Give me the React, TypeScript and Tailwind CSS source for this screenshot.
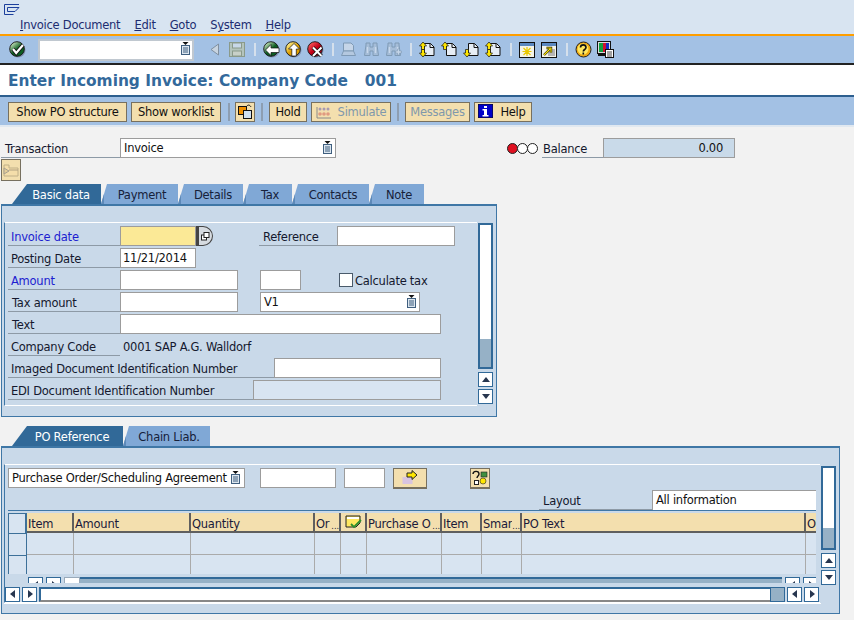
import React from "react";

function Sep() {
  return <div className="w-[2px] h-[13px] bg-[#d5e0ec] shrink-0" />;
}

function RoundIcon({ from, to, kind }: { from: string; to: string; kind: "check" | "back" | "up" | "x" }) {
  const id = "g" + kind;
  return (
    <svg width="17" height="17" viewBox="0 0 17 17" className="shrink-0">
      <defs>
        <linearGradient id={id} x1="0.1" y1="0.1" x2="0.8" y2="0.9">
          <stop offset="0" stopColor={from} />
          <stop offset="0.55" stopColor={to} />
        </linearGradient>
      </defs>
      <circle cx="9" cy="9" r="7.500" fill="#7f8fb0" />
      <circle cx="8" cy="8" r="7.300" fill={"url(#" + id + ")"} stroke="#141414" strokeWidth="0.9" />
      {kind === "check" && (
        <>
          <path d="M4 8l3.200 4 6.800-8" fill="none" stroke="#111" strokeWidth="3.800" />
          <path d="M4 8l3.200 4 6.800-8" fill="none" stroke="#fff" strokeWidth="2.200" />
        </>
      )}
      {kind === "back" && <path d="M2.500 9l5.500-5.500v3.500h8v4.500H8v3z" fill="#fff" stroke="#111" strokeWidth="0.7" />}
      {kind === "up" && <path d="M9 2.500l5.500 5.500h-3.200v7H6.800V8H3.500z" fill="#fff" stroke="#111" strokeWidth="0.7" />}
      {kind === "x" && (
        <>
          <path d="M6 6.500l8.500 8.500M14.500 6.500L6 15" stroke="#111" strokeWidth="3.600" />
          <path d="M6 6.500l8.500 8.500M14.500 6.500L6 15" stroke="#fff" strokeWidth="2" />
        </>
      )}
    </svg>
  );
}

function Pick() {
  return (
    <svg width="9" height="13" viewBox="0 0 9 13" className="shrink-0 -mt-[3px]">
      <path d="M1.500 0h6L4.500 3z" fill="#111" />
      <rect x="0.500" y="3.500" width="8" height="9" fill="#dce6ef" stroke="#3f5f7f" />
      <path d="M2 6h5M2 8h5M2 10h5" stroke="#3f5f7f" />
    </svg>
  );
}

function Printer() {
  return (
    <svg width="15" height="15" viewBox="0 0 15 15" className="shrink-0">
      <path d="M2.500 1h7.500l2.500 2.500V9h-10z" fill="#c5d5e8" stroke="#7f9ab5" />
      <path d="M2.500 9L.5 13.500h14L12.500 9z" fill="#b4c8df" stroke="#7f9ab5" />
    </svg>
  );
}

function Binoc({ plus }: { plus?: boolean }) {
  return (
    <svg width="16" height="15" viewBox="0 0 16 15" className="shrink-0">
      <path d="M2 1h4v4h3V1h4v2l1.500 10.500H9V9H6v4.500H.5L2 3z" fill="#a5bdd8" stroke="#7f9ab5" />
      <path d="M3.500 5v6M11.500 5v6" stroke="#c8d8ea" strokeWidth="1.400" />
      {plus && <path d="M11.500 7h2v2h2v2h-2v2h-2v-2h-2V9h2z" fill="#c5d5e8" stroke="#7f9ab5" strokeWidth="0.6" />}
    </svg>
  );
}

function PageArrow({ kind }: { kind: "first" | "prev" | "next" | "last" }) {
  return (
    <svg width="16" height="15" viewBox="0 0 16 15" className="shrink-0">
      <path d="M5.500 1.500h6l3.500 3.500v8.500H5.500z" fill="#e6edf5" stroke="#111" />
      <path d="M11 1.500V5.500h4" fill="none" stroke="#111" />
      {(kind === "first" || kind === "last" || kind === "prev") && <path d="M4 0L.5 4h2v3.500h3V4h2z" fill="#ffe600" stroke="#111" strokeWidth="0.7" />}
      {(kind === "first" || kind === "last" || kind === "next") && <path d="M4 15L.5 11h2V7.500h3V11h2z" fill="#ffe600" stroke="#111" strokeWidth="0.7" />}
    </svg>
  );
}

function WinIcon({ kind }: { kind: "new" | "short" }) {
  return (
    <svg width="16" height="16" viewBox="0 0 16 16" className="shrink-0">
      <rect x="0.500" y="0.500" width="15" height="15" fill="#f4f4e8" stroke="#111" />
      <rect x="1" y="1" width="14" height="3" fill="#5a88c0" />
      {kind === "new" && <path d="M8 5v9M3.500 9.500h9M4.500 6l7 7M11.500 6l-7 7" stroke="#e8c800" strokeWidth="1.200" />}
      {kind === "short" && (
        <>
          <rect x="7" y="7" width="7" height="7" fill="#b5b5b5" />
          <path d="M3 13l6-6M5.500 6h4.500v4.500" fill="none" stroke="#111" strokeWidth="2.400" />
          <path d="M3 13l6-6M5.500 6h4.500v4.500" fill="none" stroke="#ffe600" strokeWidth="1.200" />
        </>
      )}
    </svg>
  );
}

function Toolbar() {
  return (
    <div className="h-[29px] bg-[#a3c1e4] flex items-center border-b-2 border-[#222]">
      <div className="w-[9px]" />
      <RoundIcon from="#d8f0c8" to="#0d5d22" kind="check" />
      <div className="ml-[12px] w-[156px] h-[22px] bg-white border-2 border-[#c0c8d0] flex items-center justify-end pr-[2px]">
        <Pick />
      </div>
      <svg width="10" height="13" viewBox="0 0 10 13" className="ml-[16px] shrink-0">
        <path d="M8.500 1v11L1 6.500z" fill="#c8d4e0" stroke="#8090a0" />
      </svg>
      <svg width="16" height="15" viewBox="0 0 16 15" className="ml-[9px] shrink-0">
        <rect x="0.500" y="0.500" width="15" height="14" fill="#b4c4bc" stroke="#8a9a8a" />
        <rect x="3.500" y="1" width="9" height="5" fill="#c8d8e8" stroke="#8a9a8a" />
        <rect x="3.500" y="9" width="9" height="5" fill="#c8d0c8" stroke="#8a9a8a" />
      </svg>
      <div className="ml-[9px]"><Sep /></div>
      <div className="ml-[7px]"><RoundIcon from="#d8f0c8" to="#0d5d22" kind="back" /></div>
      <div className="ml-[5px]"><RoundIcon from="#fff8a0" to="#e0a000" kind="up" /></div>
      <div className="ml-[5px]"><RoundIcon from="#ff6060" to="#c00018" kind="x" /></div>
      <div className="ml-[8px]"><Sep /></div>
      <div className="ml-[7px]"><Printer /></div>
      <div className="ml-[8px]"><Binoc /></div>
      <div className="ml-[6px]"><Binoc plus /></div>
      <div className="ml-[8px]"><Sep /></div>
      <div className="ml-[7px]"><PageArrow kind="first" /></div>
      <div className="ml-[6px]"><PageArrow kind="prev" /></div>
      <div className="ml-[6px]"><PageArrow kind="next" /></div>
      <div className="ml-[6px]"><PageArrow kind="last" /></div>
      <div className="ml-[9px]"><Sep /></div>
      <div className="ml-[7px]"><WinIcon kind="new" /></div>
      <div className="ml-[6px]"><WinIcon kind="short" /></div>
      <div className="ml-[9px]"><Sep /></div>
      <svg width="17" height="17" viewBox="0 0 17 17" className="ml-[7px] shrink-0">
        <circle cx="8.500" cy="8.500" r="7.500" fill="#f0a810" stroke="#222" />
        <circle cx="8" cy="8" r="5.500" fill="#ffe860" />
        <path d="M5.500 6.500c0-3.500 5.500-3.500 5.500 0 0 2-2.700 2-2.700 4M8.300 11.500v2" fill="none" stroke="#111" strokeWidth="1.600" />
      </svg>
      <svg width="17" height="17" viewBox="0 0 17 17" className="ml-[5px] shrink-0">
        <rect x="0.500" y="0.500" width="13" height="12" fill="#ddd" stroke="#111" />
        <rect x="2" y="2" width="4" height="9" fill="#10a040" />
        <rect x="6" y="2" width="3" height="9" fill="#d01030" />
        <rect x="9" y="2" width="3" height="9" fill="#1030c0" />
        <path d="M1 14h10" stroke="#111" strokeWidth="2" />
        <rect x="8.500" y="8.500" width="8" height="8" fill="#fff" stroke="#111" />
        <path d="M10 11h5M10 13h5M10 15h5" stroke="#111" strokeWidth="0.800" />
      </svg>
    </div>
  );
}

function Btn({ children, w, dim, ml }: { children: React.ReactNode; w: string; dim?: boolean; ml?: string }) {
  return (
    <div className={`${w} ${ml ?? ""} h-[20px] shrink-0 bg-[#f3dfae] border border-[#77705f] flex items-center justify-center pt-[2px] whitespace-nowrap ${dim ? "text-[#7f98ac]" : "text-[#111]"}`}>
      {children}
    </div>
  );
}

function AppBar() {
  return (
    <div className="h-[30px] bg-[#a3c1e4] flex items-center pl-[8px] pt-[1px] border-b-2 border-[#e0e8f0]">
      <Btn w="w-[119px]">Show PO structure</Btn>
      <Btn w="w-[90px]" ml="ml-[4px]">Show worklist</Btn>
      <div className="ml-[7px]"><div className="w-[2px] h-[18px] bg-[#8d9eb2]" /></div>
      <div className="ml-[5px] w-[20px] h-[20px] bg-[#f3dfae] border border-[#77705f] flex items-center justify-center shrink-0">
        <svg width="15" height="15" viewBox="0 0 15 15">
          <rect x="0.500" y="2.500" width="8" height="8" fill="#f09000" stroke="#111" />
          <rect x="5.500" y="6.500" width="8" height="8" fill="#cfe0f0" stroke="#111" />
          <path d="M8 3c2-3 4-2 5 0" fill="none" stroke="#111" />
        </svg>
      </div>
      <div className="ml-[6px]"><div className="w-[2px] h-[18px] bg-[#8d9eb2]" /></div>
      <Btn w="w-[38px]" ml="ml-[6px]">Hold</Btn>
      <Btn w="w-[80px]" ml="ml-[4px]" dim>
        <span className="flex items-center gap-[6px]">
          <svg width="16" height="14" viewBox="0 0 16 14" className="-mt-[2px]">
            <path d="M1 2v11h14" fill="none" stroke="#8a8a8a" />
            <g fill="#a89ab0">
              <circle cx="4" cy="4" r="1.500" /><circle cx="8" cy="4" r="1.500" /><circle cx="12" cy="4" r="1.500" />
            </g>
            <g fill="#e09a80">
              <circle cx="4" cy="9" r="1.800" /><circle cx="8" cy="9" r="1.800" /><circle cx="12" cy="9" r="1.800" />
            </g>
          </svg>
          Simulate
        </span>
      </Btn>
      <div className="ml-[6px]"><div className="w-[2px] h-[18px] bg-[#8d9eb2]" /></div>
      <Btn w="w-[65px]" ml="ml-[6px]" dim>Messages</Btn>
      <Btn w="w-[58px]" ml="ml-[4px]">
        <span className="flex items-center gap-[7px] -ml-[2px]">
          <svg width="15" height="14" viewBox="0 0 15 14" className="-mt-[3px]">
            <rect width="15" height="14" fill="#0000c8" stroke="#111" />
            <path d="M6 2h3v2H6zM4.500 5H9v6h1.500v1.500h-6V11H6V6.500H4.500z" fill="#fff" />
          </svg>
          Help
        </span>
      </Btn>
    </div>
  );
}

function ActiveTab({ label, w }: { label: string; w: string }) {
  return (
    <div className={`${w} h-[20px] shrink-0 flex items-center justify-center pl-[9px] pt-[3px] [clip-path:polygon(15px_0,100%_0,100%_100%,0_100%)] bg-[#316998] text-white`}>
      {label}
    </div>
  );
}

function Tab({ label, w }: { label: string; w: string }) {
  return (
    <div className={`${w} h-[20px] shrink-0 flex items-center justify-center pl-[2px] pt-[3px] [clip-path:polygon(6px_0,100%_0,100%_100%,0_100%)] bg-[#80a8d6] text-[#16213a] border-l-[3px] border-[#5d89b8]`}>
      {label}
    </div>
  );
}

function Field({ w, ml, children, bg, cls }: { w: string; ml?: string; children?: React.ReactNode; bg?: string; cls?: string }) {
  return (
    <div className={`${w} ${ml ?? ""} h-[20px] shrink-0 ${bg ?? "bg-white"} border border-[#9c9c9c] flex items-center pl-[3px] pr-[3px] pt-[2px] text-[#111] ${cls ?? ""}`}>
      {children}
    </div>
  );
}

function Label({ w, ml, children, blue }: { w: string; ml?: string; children: React.ReactNode; blue?: boolean }) {
  return (
    <div className={`${w} ${ml ?? ""} h-[20px] shrink-0 border-b border-[#8d9aa6] flex items-center pl-[3px] pt-[4px] whitespace-nowrap ${blue ? "text-[#1d1dd0]" : "text-[#14182e]"}`}>
      {children}
    </div>
  );
}

function Row({ children }: { children: React.ReactNode }) {
  return <div className="flex h-[20px] items-center mb-[2px]">{children}</div>;
}

function ArrowBtn({ dir, ml }: { dir: "up" | "down" | "left" | "right"; ml?: string }) {
  const p = { up: "M1 7l4-5 4 5z", down: "M1 2l4 5 4-5z", left: "M7 1L2 5l5 4z", right: "M3 1l5 4-5 4z" }[dir];
  return (
    <div className={`w-[15px] h-[15px] ${ml ?? ""} shrink-0 bg-white border border-[#316998] flex items-center justify-center`}>
      <svg width="10" height="10" viewBox="0 0 10 10"><path d={p} fill="#27364f" /></svg>
    </div>
  );
}

function VScroll({ track, thumb }: { track: string; thumb: string }) {
  return (
    <div className="w-[15px] shrink-0 flex flex-col">
      <div className={`${track} bg-white border-2 border-[#316998] border-b-0`} />
      <div className={`${thumb} bg-[#96b1c6] border-2 border-t-0 border-[#316998]`} />
      <div className="mt-[3px]"><ArrowBtn dir="up" /></div>
      <div className="mt-[2px]"><ArrowBtn dir="down" /></div>
    </div>
  );
}

function Head({ w, children, tail, last }: { w: string; children?: React.ReactNode; tail?: boolean; last?: boolean }) {
  return (
    <div className={`${w} shrink-0 h-[20px] bg-[#f3dfae] ${last ? "" : "border-r-2"} border-b-2 border-[#5f5f5f] pl-[1px] text-[#1a1a3a] flex items-center overflow-hidden whitespace-nowrap`}>
      <span className="flex-1 min-w-0 overflow-hidden flex items-center pt-[5px] h-[18px]">{children}</span>
      {tail && <span className="shrink-0 self-end text-[8px] leading-[9px] tracking-normal">...</span>}
    </div>
  );
}

const COLS = ["w-[47px]", "w-[117px]", "w-[124px]", "w-[26px]", "w-[26px]", "w-[75px]", "w-[40px]", "w-[40px]", "w-[284px]", "w-[11px]"];

function DataRow({ h }: { h: string }) {
  return (
    <div className={`flex ${h} border-b border-[#aaa]`}>
      <div className="w-[19px] shrink-0 bg-[#d8e4f1] border-t border-l border-r border-[#3d7099] h-[25px]" />
      {COLS.map((c, i) => (
        <div key={i} className={`${c} shrink-0 bg-[#d8e4f1] ${i < 9 ? "border-r border-[#aaa]" : ""}`} />
      ))}
    </div>
  );
}

export default function App() {
  return (
    <div className="w-[854px] h-[620px] overflow-hidden bg-[#f2f2f2] [font-family:'DejaVu_Sans',sans-serif] text-[11.500px] tracking-[-0.25px] relative">
      {/* Menu */}
      <div className="h-[34px] bg-[#d8e4f1] pt-[4px]">
        <svg width="16" height="12" viewBox="0 0 16 12" className="ml-[4px] block">
          <path d="M.5.5H15M.5.5v10h9M3.500 3.500H15L11 7.500H3.500z" fill="none" stroke="#1c3f9c" />
        </svg>
        <div className="flex ml-[20px] mt-[2px] h-[16px] items-center text-[#202c70] gap-[14px]">
          <span><u>I</u>nvoice Document</span>
          <span><u>E</u>dit</span>
          <span><u>G</u>oto</span>
          <span>S<u>y</u>stem</span>
          <span><u>H</u>elp</span>
        </div>
      </div>
      <div className="h-[2px] bg-[#ff9e00]" />
      <Toolbar />

      {/* Title */}
      <div className="h-[32px] bg-white flex items-center gap-[17px] pl-[8px] pt-[3px] border-b-2 border-[#2d5f8f] text-[15.400px] tracking-normal font-bold text-[#33699b] whitespace-pre">
        <span>Enter Incoming Invoice: Company Code</span>
        <span>001</span>
      </div>
      <AppBar />

      {/* Transaction */}
      <div className="h-[11px]" />
      <div className="flex h-[20px] items-center">
        <Label w="w-[119px]" ml="ml-[1px]"><span className="pl-[1px]">Transaction</span></Label>
        <Field w="w-[216px]" cls="justify-between"><span>Invoice</span><Pick /></Field>
        <div className="ml-[171px] flex items-center w-[35px] shrink-0">
          <span className="w-[11px] h-[11px] rounded-full bg-[#e01020] border border-[#222] shrink-0" />
          <span className="w-[11px] h-[11px] rounded-full bg-white border border-[#222] -ml-[1px] shrink-0" />
          <span className="w-[11px] h-[11px] rounded-full bg-white border border-[#222] -ml-[1px] shrink-0" />
        </div>
        <Label w="w-[61px]"><span className="-ml-[2px]">Balance</span></Label>
        <Field w="w-[132px]" bg="bg-[#c9dae9]" cls="justify-end !pr-[11px]"><span>0.00</span></Field>
      </div>

      {/* small toggle */}
      <div className="ml-[1px] mt-[1px] w-[20px] h-[22px] bg-[#f3dfae] border-[1.500px] border-[#77705f] flex items-center justify-center">
        <svg width="16" height="15" viewBox="0 0 16 15">
          <path d="M1 2v11h14V5H6V2z" fill="#f5deaa" stroke="#c0b088" />
          <path d="M1 5l5 3-5 3z" fill="#e3cd9a" stroke="#a8a090" />
          <path d="M6 7h9" stroke="#b0a080" />
        </svg>
      </div>

      {/* Tabs */}
      <div className="flex ml-[12px] mt-[3px] h-[20px]">
        <ActiveTab label="Basic data" w="w-[89px]" />
        <Tab label="Payment" w="w-[77px]" />
        <Tab label="Details" w="w-[65px]" />
        <Tab label="Tax" w="w-[49px]" />
        <Tab label="Contacts" w="w-[77px]" />
        <Tab label="Note" w="w-[55px]" />
      </div>

      {/* Upper panel */}
      <div className="ml-[1px] w-[496px] h-[213px] bg-[#c9d9e9] border border-t-2 border-[#3f77a6] pt-[16px] pl-[2px]">
        <div className="flex h-[184px]">
          <div className="w-[473px] h-[184px] border-t border-l border-b border-t-white border-b-white border-l-[#3f77a6] pl-[3px] pt-[3px] shrink-0">
            <Row>
              <Label w="w-[112px]" blue>Invoice date</Label>
              <div className="w-[76px] h-[20px] bg-[#fbe996] border border-[#9c9c9c] shrink-0" />
              <div className="w-[17px] h-[20px] rounded-r-full bg-[#d6dbe0] border border-[#444] border-l-[3px] shrink-0 flex items-center justify-center">
                <svg width="9" height="9" viewBox="0 0 9 9">
                  <rect x="0.500" y="3" width="5" height="5" fill="#fff" stroke="#222" />
                  <rect x="3" y="0.500" width="5" height="5" fill="#fff" stroke="#222" />
                </svg>
              </div>
              <Label w="w-[78px]" ml="ml-[46px]"><span className="pl-[1px]">Reference</span></Label>
              <Field w="w-[118px]" />
            </Row>
            <Row>
              <Label w="w-[112px]">Posting Date</Label>
              <Field w="w-[76px]" cls="!pl-[2px] whitespace-nowrap">11/21/2014</Field>
            </Row>
            <Row>
              <Label w="w-[112px]" blue>Amount</Label>
              <Field w="w-[118px]" />
              <Field w="w-[41px]" ml="ml-[22px]" />
              <div className="ml-[38px] w-[14px] h-[14px] bg-white border border-[#4a5a6a] shrink-0" />
              <span className="ml-[2px] pt-[3px] text-[#14182e]">Calculate tax</span>
            </Row>
            <Row>
              <Label w="w-[112px]"><span className="pl-[1px]">Tax amount</span></Label>
              <Field w="w-[118px]" />
              <Field w="w-[160px]" ml="ml-[22px]" cls="justify-between"><span>V1</span><Pick /></Field>
            </Row>
            <Row>
              <Label w="w-[112px]"><span className="pl-[1px]">Text</span></Label>
              <Field w="w-[321px]" />
            </Row>
            <Row>
              <Label w="w-[112px]">Company Code</Label>
              <span className="ml-[3px] pt-[3px] text-[#14182e]">0001 SAP A.G. Walldorf</span>
            </Row>
            <Row>
              <Label w="w-[266px]">Imaged Document Identification Number</Label>
              <Field w="w-[167px]" />
            </Row>
            <Row>
              <Label w="w-[245px]">EDI Document Identification Number</Label>
              <Field w="w-[188px]" bg="bg-[#d8e4f1]" />
            </Row>
          </div>
          <div className="mt-[1px] ml-[1px]">
            <VScroll track="h-[116px]" thumb="h-[30px]" />
          </div>
        </div>
      </div>

      {/* Lower tabs */}
      <div className="flex ml-[12px] mt-[9px] h-[20px]">
        <ActiveTab label="PO Reference" w="w-[111px]" />
        <Tab label="Chain Liab." w="w-[87px]" />
      </div>

      {/* Lower panel */}
      <div className="ml-[1px] w-[839px] h-[168px] bg-[#c9d9e9] border border-t-2 border-[#3f77a6] pt-[16px] pl-[2px] relative">
        <div className="flex">
          <div className="w-[816px] shrink-0 h-[139px] border border-r-0 border-t-white border-b-white border-l-[#3f77a6] overflow-hidden">
            <div className="pl-[3px] pt-[3px]">
              <div className="flex h-[20px] items-center">
                <Field w="w-[237px]" cls="justify-between !pr-[4px]"><span className="whitespace-nowrap">Purchase Order/Scheduling Agreement</span><Pick /></Field>
                <Field w="w-[76px]" ml="ml-[15px]" />
                <Field w="w-[41px]" ml="ml-[8px]" />
                <div className="ml-[8px] w-[34px] h-[21px] bg-[#f3dfae] border border-[#77705f] border-b-2 flex items-center justify-center shrink-0">
                  <svg width="16" height="15" viewBox="0 0 16 15">
                    <rect x="0.500" y="7" width="10" height="7" fill="#d8c4e0" />
                    <path d="M5 3h5V.5L15 5l-5 4.500V7H5z" fill="#ffe600" stroke="#222" />
                  </svg>
                </div>
                <div className="ml-[43px] w-[20px] h-[21px] bg-[#f3dfae] border border-[#77705f] border-b-2 flex items-center justify-center shrink-0">
                  <svg width="16" height="16" viewBox="0 0 16 16">
                    <path d="M1 4c0-3 6-4 6 0 0 2-2 2-2 4" fill="none" stroke="#111" strokeWidth="1.400" />
                    <rect x="9" y="2" width="6" height="5" fill="#3f8f3f" stroke="#222" strokeWidth="0.600" />
                    <circle cx="11" cy="11" r="3" fill="#ffe600" stroke="#222" strokeWidth="0.600" />
                    <rect x="2.500" y="10.500" width="4" height="4" fill="#fff" stroke="#222" />
                  </svg>
                </div>
              </div>
              <div className="flex h-[20px] items-center mt-[2px]">
                <div className="w-[531px] shrink-0" />
                <Label w="w-[113px]"><span className="pl-[1px]">Layout</span></Label>
                <div className="w-[164px] h-[20px] shrink-0 bg-white border-t border-l border-[#9c9c9c] flex items-center pl-[3px] text-[#111]">All information</div>
              </div>
              <div className="w-[808px] h-[1px] bg-[#3f77a6]" />
              <div className="h-[2px]" />
              <div className="w-[808px] overflow-hidden">
                <div className="flex h-[20px]">
                  <div className="w-[19px] h-[20px] shrink-0 bg-[#d8e4f1] border-t border-l border-[#3d7099] border-r-2 border-r-[#3d7099]" />
                  <Head w={COLS[0]}>Item</Head>
                  <Head w={COLS[1]}>Amount</Head>
                  <Head w={COLS[2]}>Quantity</Head>
                  <Head w={COLS[3]} tail>Or</Head>
                  <Head w={COLS[4]}>
                    <svg width="18" height="15" viewBox="0 0 18 15" className="ml-[3px] -mt-[5px] shrink-0">
                      <path d="M1 1h14v7l-4 4H1z" fill="#ffe860" stroke="#222" />
                      <path d="M2 2h12v2H2z" fill="#fff" />
                      <path d="M6 9l3 3 7-7" fill="none" stroke="#2f8f2f" strokeWidth="1.800" />
                    </svg>
                  </Head>
                  <Head w={COLS[5]} tail>Purchase O</Head>
                  <Head w={COLS[6]}>Item</Head>
                  <Head w={COLS[7]} tail>Smar</Head>
                  <Head w={COLS[8]}>PO Text</Head>
                  <Head w={COLS[9]} last>O</Head>
                </div>
                <DataRow h="h-[22px]" />
                <div className="h-[19px] overflow-hidden"><DataRow h="h-[22px]" /></div>
              </div>
              <div className="flex items-start h-[6px] mt-[3px] overflow-hidden w-[808px] pl-[20px]">
                <ArrowBtn dir="left" />
                <ArrowBtn dir="right" ml="ml-[3px]" />
                <div className="ml-[3px] w-[16px] h-[15px] bg-white border border-[#9ab] shrink-0" />
                <div className="w-[702px] h-[15px] bg-[#96b1c6] border-t-2 border-[#316998] shrink-0" />
                <ArrowBtn dir="left" ml="ml-[3px]" />
                <ArrowBtn dir="right" ml="ml-[3px]" />
              </div>
            </div>
          </div>
          <div className="mt-[2px] ml-[1px] flex flex-col">
            <VScroll track="h-[62px]" thumb="h-[22px]" />
          </div>
        </div>
        <div className="absolute left-[2px] top-[137px] w-[817px] h-[19px] flex items-center border-b border-white pl-[1px]">
          <ArrowBtn dir="left" />
          <ArrowBtn dir="right" ml="ml-[2px]" />
          <div className="ml-[2px] w-[731px] h-[15px] bg-white border-2 border-[#316998] border-r-0 border-b-[#888] shrink-0" />
          <div className="w-[15px] h-[15px] bg-[#96b1c6] border border-[#316998] shrink-0" />
          <ArrowBtn dir="left" ml="ml-[2px]" />
          <ArrowBtn dir="right" ml="ml-[2px]" />
        </div>
      </div>
    </div>
  );
}
